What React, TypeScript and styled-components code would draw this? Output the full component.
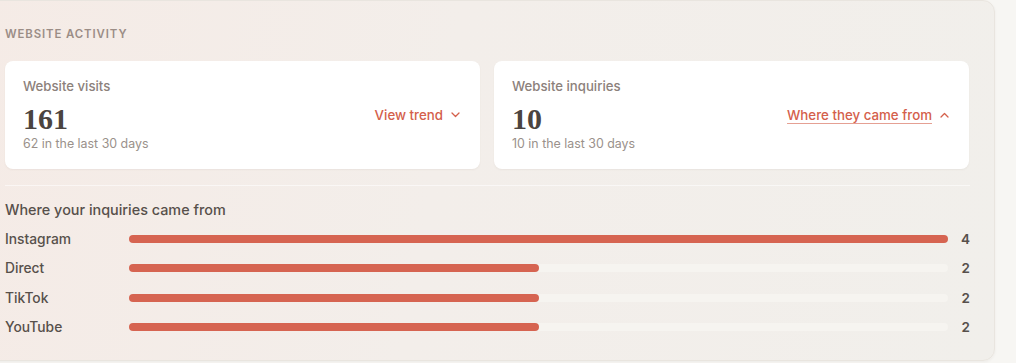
import React from "react";
import styled, { createGlobalStyle } from "styled-components";

const Global = createGlobalStyle`
  html, body { margin: 0; padding: 0; background: #f7f6f3; }
  body { font-family: Inter, "Noto Sans", sans-serif; -webkit-font-smoothing: antialiased; }
  * { box-sizing: border-box; }
`;

const Page = styled.div`
  width: 1016px;
  height: 363px;
  overflow: hidden;
  background: #f7f6f3;
`;

const Panel = styled.section`
  margin-left: -21px;
  width: 1016px;
  height: 361px;
  padding: 25px 25px 0 25px;
  border-radius: 0 12px 12px 12px;
  border: 1px solid #e9e5df;
  background: linear-gradient(100deg, #f5ebe6 0%, #f3eeea 45%, #f1efeb 100%);
  box-shadow: 0 1px 3px rgba(60, 40, 30, 0.05);
`;

const Eyebrow = styled.h2`
  margin: 0 0 19px 0;
  font-size: 11.4px;
  line-height: 16px;
  font-weight: 600;
  letter-spacing: 0.9px;
  text-transform: uppercase;
  color: #9b8d86;
`;

const Cards = styled.div`
  display: grid;
  grid-template-columns: 1fr 1fr;
  gap: 14px;
  width: 964px;
`;

const Card = styled.div`
  background: #ffffff;
  border-radius: 8px;
  height: 108px;
  padding: 16px 20px 16px 18px;
  display: flex;
  align-items: center;
  justify-content: space-between;
  box-shadow: 0 1px 2px rgba(80, 60, 50, 0.06);
`;

const Stat = styled.div`
  display: flex;
  flex-direction: column;
  align-self: flex-start;
`;

const StatLabel = styled.div`
  font-size: 13.2px;
  line-height: 18px;
  font-weight: 500;
  color: #8c817b;
`;

const StatValue = styled.div`
  font-family: "Liberation Serif", "Times New Roman", serif;
  font-weight: 700;
  font-size: 30px;
  line-height: 32px;
  margin-top: 8px;
  color: #4b4440;
`;

const StatSub = styled.div`
  font-size: 12.4px;
  line-height: 15px;
  margin-top: 1px;
  color: #9a918b;
`;

const Action = styled.button<{ $underline?: boolean }>`
  display: flex;
  align-items: center;
  gap: 8px;
  border: 0;
  background: none;
  padding: 0;
  font-family: inherit;
  font-size: 13.3px;
  font-weight: 500;
  color: #d4604b;
  cursor: pointer;
  span {
    text-decoration: ${(p) => (p.$underline ? "underline" : "none")};
    text-decoration-color: rgba(212, 96, 75, 0.6);
    text-underline-offset: 3px;
  }
`;

const Breakdown = styled.div`
  margin-top: 16px;
  padding-top: 14px;
  border-top: 1px solid rgba(255, 255, 255, 0.55);
  width: 965px;
`;

const BreakdownTitle = styled.h3`
  margin: 0 0 4px 0;
  font-size: 14.4px;
  line-height: 20px;
  font-weight: 500;
  color: #57504b;
`;

const Row = styled.div`
  display: grid;
  grid-template-columns: 124px 819px 22px;
  align-items: center;
  height: 29.5px;
`;

const RowLabel = styled.div`
  font-size: 13.8px;
  font-weight: 500;
  color: #57504b;
`;

const Track = styled.div`
  height: 8px;
  border-radius: 4px;
  background: #f6f4f0;
`;

const Fill = styled.div`
  height: 100%;
  border-radius: 4px;
  background: #d66451;
`;

const Count = styled.div`
  text-align: right;
  font-size: 13.5px;
  font-weight: 600;
  color: #57504b;
`;

const Chevron = ({ up }: { up?: boolean }) => (
  <svg width="9" height="6" viewBox="0 0 9 6" fill="none">
    <path
      d={up ? "M1 5L4.5 1.5L8 5" : "M1 1L4.5 4.5L8 1"}
      stroke="#d4604b"
      strokeWidth="1.3"
      strokeLinecap="round"
      strokeLinejoin="round"
    />
  </svg>
);

const sources = [
  { name: "Instagram", count: 4 },
  { name: "Direct", count: 2 },
  { name: "TikTok", count: 2 },
  { name: "YouTube", count: 2 },
];

export default function App() {
  const max = Math.max(...sources.map((s) => s.count));
  return (
    <Page>
      <Global />
      <Panel>
        <Eyebrow>Website activity</Eyebrow>
        <Cards>
          <Card>
            <Stat>
              <StatLabel>Website visits</StatLabel>
              <StatValue>161</StatValue>
              <StatSub>62 in the last 30 days</StatSub>
            </Stat>
            <Action>
              <span>View trend</span>
              <Chevron />
            </Action>
          </Card>
          <Card>
            <Stat>
              <StatLabel>Website inquiries</StatLabel>
              <StatValue>10</StatValue>
              <StatSub>10 in the last 30 days</StatSub>
            </Stat>
            <Action $underline>
              <span>Where they came from</span>
              <Chevron up />
            </Action>
          </Card>
        </Cards>
        <Breakdown>
          <BreakdownTitle>Where your inquiries came from</BreakdownTitle>
          {sources.map((s) => (
            <Row key={s.name}>
              <RowLabel>{s.name}</RowLabel>
              <Track>
                <Fill style={{ width: `${(s.count / max) * 100}%` }} />
              </Track>
              <Count>{s.count}</Count>
            </Row>
          ))}
        </Breakdown>
      </Panel>
    </Page>
  );
}
